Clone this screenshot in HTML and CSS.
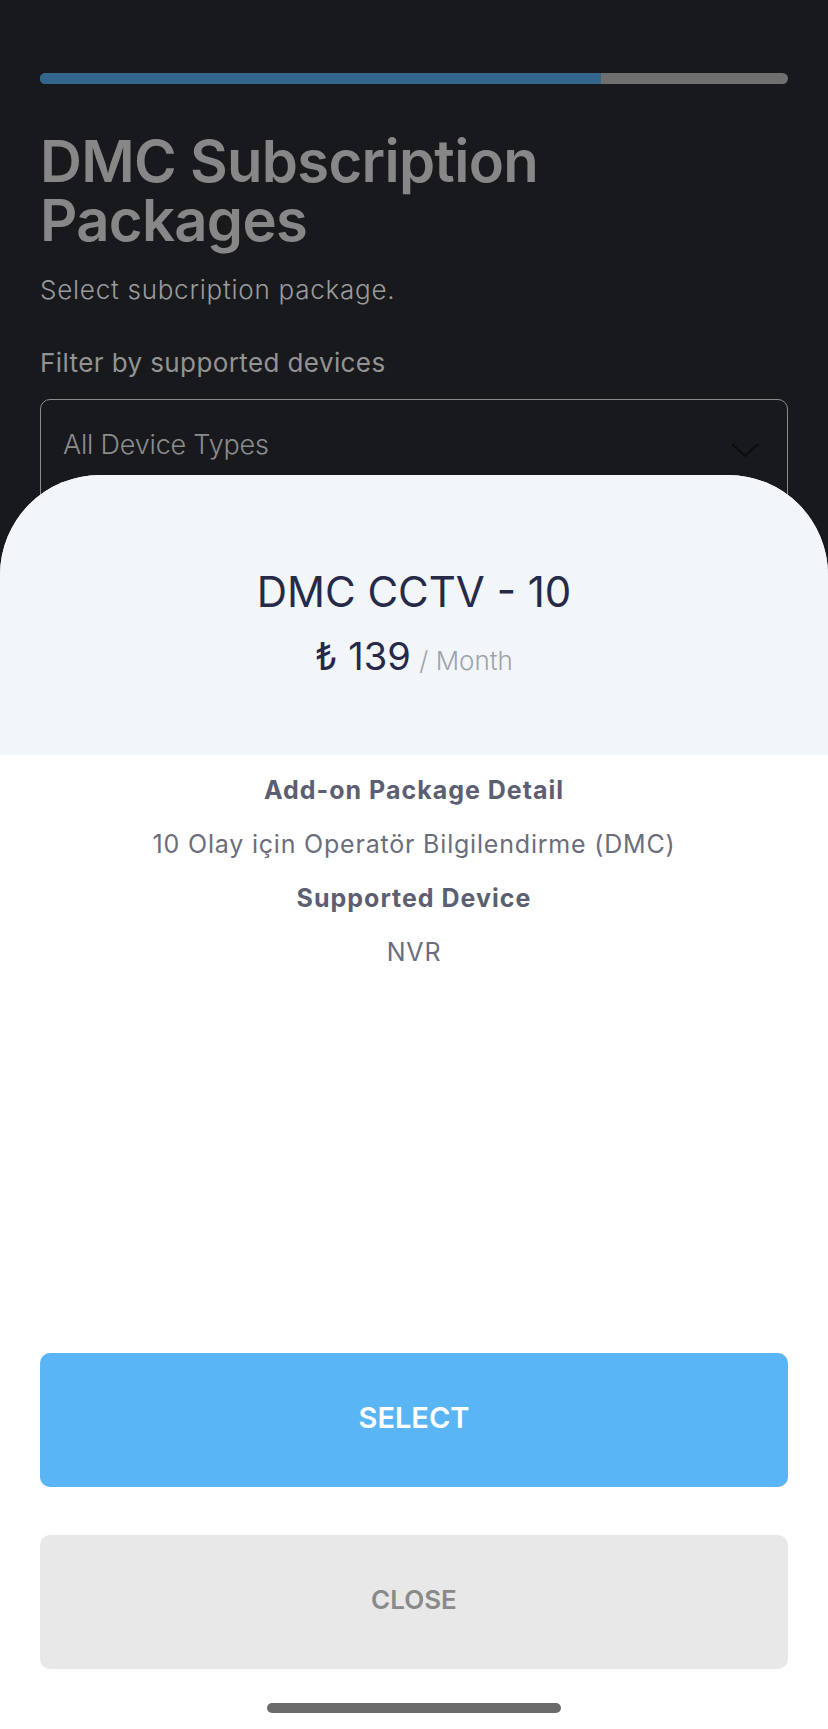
FILE: index.html
```html
<!DOCTYPE html>
<html lang="en">
  <head>
    <meta charset="utf-8" />
    <title>DMC Subscription Packages</title>
    <meta name="viewport" content="width=device-width, initial-scale=1" />
    <link rel="stylesheet" href="styles.css">
  </head>
  <body>
    <main class="page">
      <div class="progress">
        <div class="progress-fill" style="width: 75%"></div>
      </div>
      <h1 class="title">DMC Subscription Packages</h1>
      <p class="subtitle">Select subcription package.</p>
      <label class="filter-label" for="device-filter">Filter by supported devices</label>
      <div class="select" id="device-filter">
        <span>All Device Types</span>
        <svg class="chevron" width="28" height="15" viewBox="0 0 28 15">
          <polyline points="1,1 14,13 27,1" fill="none" stroke="#0b0c0e" stroke-width="2" />
        </svg>
      </div>
    </main>

    <section class="sheet">
      <header class="sheet-head">
        <h2 class="package-name">DMC CCTV - 10</h2>
        <div class="price">
          <span class="amount">₺ 139</span>
          <span class="period">/ Month</span>
        </div>
      </header>
      <div class="details">
        <p class="detail-title">Add-on Package Detail</p>
        <p class="detail-text">10 Olay için Operatör Bilgilendirme (DMC)</p>
        <p class="detail-title">Supported Device</p>
        <p class="detail-text">NVR</p>
      </div>
      <div class="actions">
        <button class="btn btn-select" type="button">SELECT</button>
        <button class="btn btn-close" type="button">CLOSE</button>
      </div>
      <div class="home-indicator"></div>
    </section>
  </body>
</html>
```

FILE: styles.css
```css
html,
body {
  margin: 0;
  height: 100%;
}
body {
  position: relative;
  overflow: hidden;
  background-color: #18191d;
  font-family: Inter, Lato, "Noto Sans", sans-serif;
}
p,
h1,
h2 {
  margin: 0;
}

/* background screen */
.page {
  padding: 73px 40px 0;
}
.progress {
  height: 11px;
  border-radius: 6px;
  background-color: #6f6f6f;
  overflow: hidden;
}
.progress-fill {
  height: 100%;
  background-color: #33668c;
}
.title {
  margin-top: 48px;
  font-size: 58px;
  line-height: 59px;
  font-weight: 600;
  letter-spacing: -0.7px;
  color: #878787;
  max-width: 540px;
}
.subtitle {
  margin-top: 24px;
  font-size: 26px;
  line-height: 32px;
  font-weight: 300;
  letter-spacing: 0.75px;
  color: #9b9b9b;
}
.filter-label {
  display: block;
  margin-top: 41px;
  font-size: 26px;
  line-height: 32px;
  letter-spacing: 0.4px;
  color: #939393;
}
.select {
  margin-top: 20px;
  height: 120px;
  box-sizing: border-box;
  border: 1.5px solid #8a8a8a;
  border-radius: 10px;
  padding: 28px 28px 0 22px;
  display: flex;
  justify-content: space-between;
  align-items: flex-start;
  font-size: 27px;
  line-height: 34px;
  font-weight: 300;
  letter-spacing: -0.2px;
  color: #8c8c8c;
}
.chevron {
  margin-top: 15px;
}

/* bottom sheet */
.sheet {
  position: absolute;
  top: 475px;
  left: 0;
  right: 0;
  bottom: 0;
  display: flex;
  flex-direction: column;
  background-color: #fff;
  border-radius: 100px 100px 0 0;
  overflow: hidden;
}
.sheet-head {
  height: 280px;
  box-sizing: border-box;
  padding-top: 92px;
  background-color: #f2f6f9;
  text-align: center;
}
.package-name {
  font-size: 42px;
  line-height: 50px;
  font-weight: 400;
  color: #262a48;
}
.price {
  margin-top: 14px;
  line-height: 50px;
}
.amount {
  font-size: 38px;
  color: #262a48;
}
.period {
  margin-left: 4px;
  font-size: 26px;
  font-weight: 300;
  color: #9fa2aa;
}
.details {
  padding-top: 8px;
  text-align: center;
  font-size: 25px;
  line-height: 54px;
}
.detail-title {
  font-weight: 700;
  letter-spacing: 1px;
  color: #5c5f71;
}
.detail-text {
  letter-spacing: 0.8px;
  color: #6b6e7a;
}
.actions {
  margin-top: auto;
  padding: 0 40px;
  display: flex;
  flex-direction: column;
  gap: 48px;
}
.btn {
  height: 134px;
  border: 0;
  border-radius: 10px;
  padding: 0 0 6px;
  font-family: inherit;
  font-size: 29px;
  font-weight: 600;
}
.btn-select {
  background-color: #5ab5f5;
  color: #fff;
}
.btn-close {
  font-size: 26px;
  font-weight: 600;
  background-color: #e8e8e8;
  color: #8a8a8a;
}
.home-indicator {
  width: 294px;
  height: 10px;
  margin: 34px auto 16px;
  border-radius: 5px;
  background-color: #6b6b6b;
}
```
